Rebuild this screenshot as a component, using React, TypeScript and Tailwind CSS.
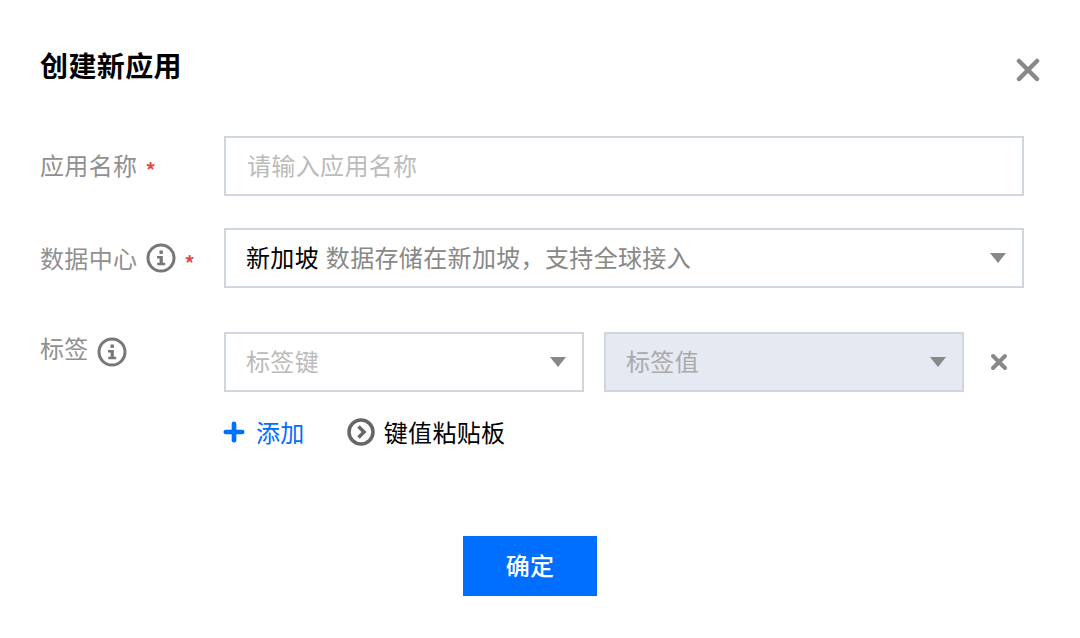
import { Plus, X } from 'lucide-react';

const font = '[font-family:"Noto_Sans_CJK_SC",sans-serif]';

function InfoIcon() {
    return (
        <svg width="30" height="30" viewBox="0 0 30 30" fill="none" className="shrink-0">
            <circle cx="15" cy="15" r="13" stroke="#777" strokeWidth="3" />
            <rect x="13.5" y="7.5" width="3.4" height="3.4" fill="#777" />
            <path d="M11 13h5.8v6.8h2.4v2.4h-8v-2.4h2.4v-4.4h-2.6z" fill="#777" />
        </svg>
    );
}

function Caret() {
    return (
        <svg width="16" height="10" viewBox="0 0 16 10" className="shrink-0">
            <path d="M0 0h16l-8 10z" fill="#888" />
        </svg>
    );
}

function Star() {
    return <span className="text-[20px] leading-none text-[#e54545] font-bold mt-[10px]">*</span>;
}

export default function App() {
    return (
        <div className={`w-[1080px] h-[638px] bg-white overflow-hidden relative pl-10 pr-14 pt-[45px] tracking-[0.35px] ${font}`}>
            <h3 className="text-[28px] leading-[40px] font-bold text-black tracking-[0.4px]">创建新应用</h3>
            <button className="absolute top-[52px] right-[34px] text-[#888]">
                <X size={36} strokeWidth={3} />
            </button>

            {/* Form */}
            <div className="mt-[51px] flex flex-col">
                <div className="flex items-center h-[60px]">
                    <div className="w-[184px] flex items-center gap-2 text-[24px] text-[#909090] -mt-[3px]">
                        应用名称 <Star />
                    </div>
                    <div className="w-[800px] h-[60px] border-2 border-[#cfd6de] pl-[21px] pr-4 pb-[2px] flex items-center text-[24px] text-[#bbb]">
                        请输入应用名称
                    </div>
                </div>

                <div className="flex items-center h-[60px] mt-8">
                    <div className="w-[184px] flex items-center gap-[8px] text-[24px] text-[#909090] -mt-[1px]">
                        数据中心 <span className="ml-[1px]"><InfoIcon /></span> <Star />
                    </div>
                    <div className="w-[800px] h-[60px] border-2 border-[#cfd6de] pl-5 pr-4 flex items-center justify-between text-[24px]">
                        <span className="text-black -mt-[2px]">
                            新加坡 <span className="text-[#888] ml-[1px]">数据存储在新加坡，支持全球接入</span>
                        </span>
                        <Caret />
                    </div>
                </div>

                <div className="flex items-start mt-[44px]">
                    <div className="w-[184px] flex items-center gap-[8px] text-[24px] text-[#909090] mt-[1px]">
                        <span className="-mt-[4px]">标签</span> <span className="mt-[4px]"><InfoIcon /></span>
                    </div>
                    <div className="flex flex-col">
                        <div className="flex items-center">
                            <div className="w-[360px] h-[60px] border-2 border-[#cfd6de] pl-5 pr-4 flex items-center justify-between text-[24px] text-[#bbb]">
                                <span className="-mt-[2px]">标签键</span>
                                <Caret />
                            </div>
                            <div className="ml-5 w-[360px] h-[60px] border-2 border-[#cfd6de] bg-[#e5e9f2] pl-5 pr-4 flex items-center justify-between text-[24px] text-[#aaa]">
                                <span className="-mt-[2px]">标签值</span>
                                <Caret />
                            </div>
                            <X size={24} strokeWidth={4} className="ml-[23px] text-[#888]" />
                        </div>
                        <div className="flex items-center h-[40px] mt-[20px] text-[24px]">
                            <Plus size={28} strokeWidth={4} className="text-[#006eff] -ml-1" />
                            <span className="text-[#006eff] ml-[8px]">添加</span>
                            <svg width="30" height="30" viewBox="0 0 30 30" fill="none" className="ml-[41px] shrink-0">
                                <circle cx="15" cy="15" r="12" stroke="#666" strokeWidth="3.5" />
                                <path d="M12.5 9.5 18 15l-5.5 5.5" stroke="#666" strokeWidth="3.5" />
                            </svg>
                            <span className="text-black ml-[8px]">键值粘贴板</span>
                        </div>
                    </div>
                </div>
            </div>

            {/* Footer */}
            <div className="absolute left-0 right-5 top-[536px] flex justify-center">
                <button className="w-[134px] h-[60px] bg-[#006eff] text-white text-[24px] font-medium pb-[2px]">确定</button>
            </div>
        </div>
    );
}
